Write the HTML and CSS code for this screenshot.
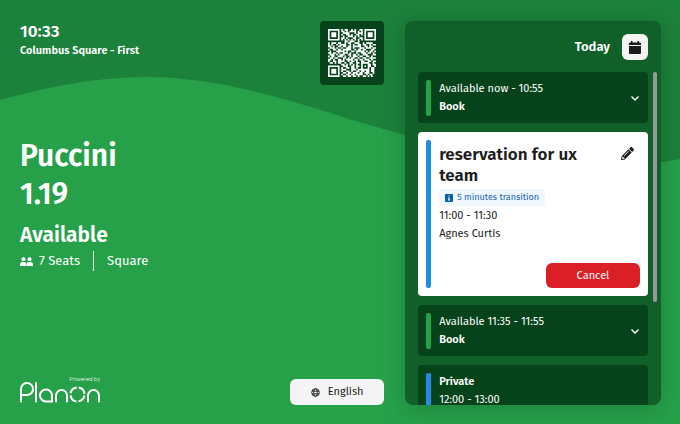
FILE: index.html
```
<!DOCTYPE html>
<html lang="en">
<head>
    <meta charset="UTF-8">
    <meta name="viewport" content="width=device-width, initial-scale=1.0">
    <title>Puccini 1.19</title>
    <link rel="stylesheet" href="styles.css">
</head>
<body>
    <svg class="wave" viewBox="0 0 680 424" preserveAspectRatio="none" aria-hidden="true">
        <path d="M0 100C50 86 100 77 145 77C240 77 320 113 405 135C500 165 590 176 680 159V424H0Z" fill="#26a14a"/>
    </svg>

    <div class="screen">
        <main class="room">
            <header class="room-top">
                <div>
                    <div class="clock">10:33</div>
                    <div class="location">Columbus Square - First</div>
                </div>
                <div class="qr">
                    <svg id="qr-code" viewBox="0 0 29 29" role="img" aria-label="QR code"></svg>
                </div>
            </header>

            <section class="room-info">
                <h1>Puccini<br>1.19</h1>
                <h2>Available</h2>
                <div class="facts">
                    <svg class="seats-icon" viewBox="0 0 26 18" aria-hidden="true">
                        <circle cx="7" cy="4.5" r="4"/>
                        <circle cx="19" cy="4.5" r="4"/>
                        <path d="M0 18v-3q0-5 5-5h4q4 0 4 5q0-5 4-5h4q5 0 5 5v3H14v-3h-1v3z"/>
                    </svg>
                    <span class="seats">7 Seats</span>
                    <span class="setup">Square</span>
                </div>
            </section>

            <footer class="room-bottom">
                <div class="brand">
                    <span class="powered">Powered by</span>
                    <svg class="logo" viewBox="0 0 80 21" role="img" aria-label="Planon">
                        <path d="M1 19.500V7a6 6 0 1 1 6 6H1M16 1v18.500M32 13.500a6 6 0 1 0-6 6h6v-6M36 19.500v-6a5.500 5.500 0 0 1 11 0v6M68 19.500v-6a5.500 5.500 0 0 1 11 0v6"/>
                        <circle cx="57.500" cy="12.500" r="7" stroke-dasharray="9 2" stroke-dashoffset="-1"/>
                    </svg>
                </div>
                <button class="language" type="button">
                    <svg viewBox="0 0 20 20" aria-hidden="true">
                        <circle cx="10" cy="10" r="8.500"/>
                        <ellipse cx="10" cy="10" rx="4" ry="8.500"/>
                        <path d="M2 7h16M2 13h16"/>
                    </svg>
                    English
                </button>
            </footer>
        </main>

        <aside class="agenda">
            <header class="agenda-top">
                <span class="today">Today</span>
                <button class="calendar" type="button" aria-label="Choose date">
                    <svg viewBox="0 0 12 13" aria-hidden="true">
                        <path d="M0 4V2.500Q0 1.500 1 1.500H2V0H3.500V1.500H8.500V0H10V1.500H11Q12 1.500 12 2.500V4ZM0 5H12V12Q12 13 11 13H1Q0 13 0 12Z"/>
                    </svg>
                </button>
            </header>

            <div class="slots">
                <article class="slot free">
                    <div class="slot-text">
                        <div>Available now - 10:55</div>
                        <strong>Book</strong>
                    </div>
                    <button class="expand" type="button" aria-label="Show options">
                        <svg viewBox="0 0 8 5" aria-hidden="true"><path d="M.5.5L4 4L7.500.5"/></svg>
                    </button>
                </article>

                <article class="slot selected">
                    <div class="slot-text">
                        <div class="slot-head">
                            <h3>reservation for ux team</h3>
                            <button class="edit" type="button" aria-label="Edit reservation">
                                <svg viewBox="0 0 512 512" aria-hidden="true">
                                    <path fill-rule="evenodd" d="M498 142l-46 46c-5 5-12 5-17 0L324 77c-5-5-5-12 0-17l46-46c19-19 49-19 68 0l60 60c19 19 19 49 0 68zM284 100L22 362 0 484c-3 16 12 30 28 28l122-22 262-262c5-5 5-12 0-17L301 100c-5-5-12-5-17 0zM124 340c-5-6-5-14 0-20l154-154c6-5 14-5 20 0s5 14 0 20L144 340c-6 5-14 5-20 0zM88 424h48v36l-64 12-32-32 12-64h36z"/>
                                </svg>
                            </button>
                        </div>
                        <div class="transition">
                            <svg viewBox="0 0 8 8" aria-hidden="true">
                                <rect width="8" height="8" rx="1" fill="#0d5fa8"/>
                                <path d="M3.500 1.500h1v1h-1zM3 3.500h1.500v2H5v1H3v-1h.5v-1H3z" fill="#eff7ff"/>
                            </svg>
                            5 minutes transition
                        </div>
                        <div>11:00 - 11:30</div>
                        <div>Agnes Curtis</div>
                        <button class="cancel" type="button">Cancel</button>
                    </div>
                </article>

                <article class="slot free">
                    <div class="slot-text">
                        <div>Available 11:35 - 11:55</div>
                        <strong>Book</strong>
                    </div>
                    <button class="expand" type="button" aria-label="Show options">
                        <svg viewBox="0 0 8 5" aria-hidden="true"><path d="M.5.5L4 4L7.500.5"/></svg>
                    </button>
                </article>

                <article class="slot">
                    <div class="slot-text">
                        <strong>Private</strong>
                        <div>12:00 - 13:00</div>
                    </div>
                </article>
            </div>
            <div class="scroll-thumb"></div>
        </aside>
    </div>

    <script src="qr.js"></script>
</body>
</html>
```
FILE: styles.css
```
* {
    box-sizing: border-box;
}

body {
    margin: 0;
    background-color: #1c813b;
    color: white;
    font-family: "Fira Sans", "Noto Sans", sans-serif;
    font-size: 11px;
    line-height: 18px;
}

h1, h2, h3 {
    margin: 0;
    font-weight: 600;
}

button {
    border: none;
    padding: 0;
    font: inherit;
    color: inherit;
    background: none;
    cursor: pointer;
}

svg {
    display: block;
}

/* Background wave behind the whole screen */
.wave {
    position: absolute;
    width: 100%;
    height: 100%;
    z-index: -1;
}

.screen {
    display: grid;
    grid-template-columns: 37fr 26fr;
    grid-template-rows: 100%;
    gap: 21px;
    height: 100vh;
    padding: 21px 19px 19px 20px;
}

/* Left side */
.room {
    display: flex;
    flex-direction: column;
}

.room-top, .room-bottom {
    display: flex;
    justify-content: space-between;
}

.clock {
    font-size: 17px;
    font-weight: 600;
    line-height: 21px;
}

.location {
    font-weight: 600;
}

.qr {
    width: 64px;
    padding: 8px;
    background-color: #06431a;
    border-radius: 4px;
}

#qr-code {
    fill: white;
}

.room-info {
    margin: 52px 0 auto;
}

h1 {
    font-size: 30px;
    line-height: 38px;
}

h2 {
    margin-top: 6px;
    font-size: 21px;
    line-height: 32px;
}

.facts {
    display: flex;
    align-items: center;
    font-size: 13px;
    line-height: 20px;
}

.seats-icon {
    width: 13px;
    margin-right: 6px;
    fill: white;
}

.setup {
    margin-left: 13px;
    padding-left: 13px;
    border-left: 1px solid white;
}

.room-bottom {
    align-items: flex-end;
}

.brand {
    width: 80px;
    padding-bottom: 2px;
}

.powered {
    display: block;
    font-family: Roboto, sans-serif;
    font-size: 6px;
    font-weight: 300;
    line-height: 7px;
    text-align: right;
}

.logo {
    fill: none;
    stroke: white;
    stroke-width: 2;
    stroke-linecap: round;
}

.logo circle {
    stroke-linecap: butt;
}

.language {
    display: flex;
    align-items: center;
    justify-content: center;
    gap: 8px;
    width: 94px;
    height: 26px;
    background-color: #f4f4f4;
    border-radius: 6px;
    color: #1c1c1c;
}

.language svg {
    width: 9px;
    fill: none;
    stroke: #1c1c1c;
    stroke-width: 2;
}

/* Agenda panel */
.agenda {
    position: relative;
    display: flex;
    flex-direction: column;
    gap: 12px;
    padding: 13px 13px 0;
    overflow: hidden;
    background-color: #116029;
    border-radius: 8px;
    box-shadow: 0 4px 24px rgba(0, 0, 0, 0.2);
}

.agenda-top {
    display: flex;
    align-items: center;
    justify-content: flex-end;
    gap: 12px;
}

.today {
    font-size: 13px;
    font-weight: 600;
}

.calendar {
    display: flex;
    align-items: center;
    justify-content: center;
    width: 26px;
    height: 26px;
    background-color: #f4f4f4;
    border-radius: 6px;
}

.calendar svg {
    width: 12px;
    fill: #1c1c1c;
}

.slots {
    display: flex;
    flex-direction: column;
    gap: 9px;
    min-height: 0;
    overflow: hidden;
}

.slot {
    display: flex;
    flex-shrink: 0;
    gap: 8px;
    padding: 8px 8px 7px;
    background-color: #06431a;
    border-radius: 4px;
}

.slot::before {
    content: "";
    width: 5px;
    background-color: #228be6;
    border-radius: 2px;
}

.slot.free::before {
    background-color: #26a14a;
}

.slot-text {
    flex: 1;
}

.slot strong {
    display: block;
    font-weight: 600;
}

.expand {
    align-self: center;
    width: 10px;
}

.expand svg {
    width: 8px;
    margin: auto;
    overflow: visible;
    fill: none;
    stroke: white;
    stroke-width: 1.4;
}

.slot.selected {
    padding-bottom: 8px;
    background-color: white;
    color: #1c1c1c;
}

.slot-head {
    display: flex;
    justify-content: space-between;
    gap: 24px;
    padding: 4px 6px 3px 0;
}

h3 {
    font-size: 17px;
    line-height: 21px;
}

.edit {
    align-self: flex-start;
    padding-top: 3px;
}

.edit svg {
    width: 13px;
    fill: #1c1c1c;
}

.transition {
    display: flex;
    align-items: center;
    gap: 4px;
    width: fit-content;
    margin-bottom: 1px;
    padding: 0 6px;
    background-color: #eff7ff;
    border-radius: 2px;
    color: #1c66a8;
    font-size: 9px;
    line-height: 17px;
}

.transition svg {
    width: 8px;
}

.cancel {
    display: block;
    width: 94px;
    height: 25px;
    margin: 20px 0 0 auto;
    background-color: #db1f26;
    border-radius: 6px;
    color: white;
}

.scroll-thumb {
    position: absolute;
    top: 51px;
    right: 4px;
    width: 4px;
    height: 60%;
    background-color: #999999;
    border-radius: 2px;
}
```
FILE: qr.js
```
// One string per row, "#" is a light module
var rows = [
    '#######.#.##..#.#..##.#######',
    '#.....#.##.#.####.#.#.#.....#',
    '#.###.#..####...#.###.#.###.#',
    '#.###.#.#..##.#..##.#.#.###.#',
    '#.###.#..#..###.#.#...#.###.#',
    '#.....#.##.#...##..##.#.....#',
    '#######.#.#.#.#.#.#.#.#######',
    '..........##.###..#..........',
    '#.###.##..#.##..###..#.####..',
    '#.#..#.####..#.#..##.##..#.##',
    '##.#..##.##.##.#####..##.##..',
    '.###.#..#..###.#...###.###.##',
    '#..##.##.#####..#.##.##...##.',
    '.#...#####.#..##.#####.#.##.#',
    '##.##.#..###.#...#..###.##.#.',
    '.###.#.###..##.##.#..###...##',
    '#.##..###.#..#.###.##..##.#..',
    '.##.##...##.#.##..#..##..####',
    '##.#..##.#.####.##.##.###.#..',
    '#..##.####..#.##.#..##..##.##',
    '.##.#.##..#..##..##.#####..#.',
    '........##.#.#.#.#..#...##.##',
    '#######..###..##.##.#.#.##..#',
    '#.....#.#..##.##.#..#...#.##.',
    '#.###.#.###...###.#######.##.',
    '#.###.#.#..##.#..##.##.##.##.',
    '#.###.#..##.##.###.##.###..#.',
    '#.....#.#..##.##.####..#.##..',
    '#######..##.##.##.#..##.#.#..'
];

var path = '';
rows.forEach(function (row, y) {
    for (var x = 0; x < row.length; x++) {
        if (row[x] === '#') {
            path += 'M' + x + ' ' + y + 'h1v1h-1z';
        }
    }
});
document.getElementById('qr-code').innerHTML = '<path d="' + path + '"/>';
```
